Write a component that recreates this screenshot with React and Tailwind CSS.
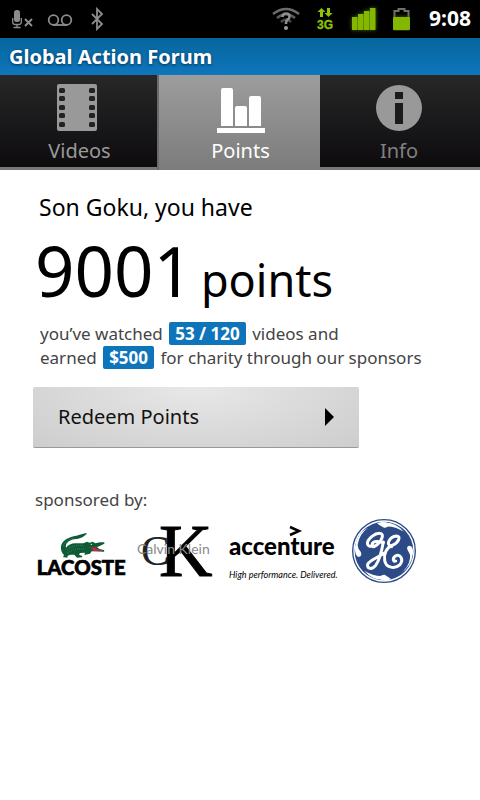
import React from "react";

function StatusBar() {
  return (
    <header className="flex h-[38px] items-center bg-black pr-[9px] pl-3 text-[#8c8c8c]">
      <svg width="21" height="20" viewBox="0 0 21 20" fill="none" stroke="currentColor" aria-label="Microphone muted">
        <rect x="2" y="1" width="6" height="12" rx="2.500" fill="currentColor" stroke="none" />
        <path d="M.7 9v4q0 2.500 2.500 2.500h3.600q2.500 0 2.500-2.500V9M5 15v3M1.500 18.500h7" strokeWidth="1.300" />
        <path d="M13 10l7 7M20 10l-7 7" strokeWidth="2" />
      </svg>
      <svg className="ml-[14px]" width="26" height="14" viewBox="0 -2 26 14" fill="none" stroke="currentColor" strokeWidth="1.800" aria-label="Voicemail">
        <circle cx="6.500" cy="6" r="4.800" />
        <circle cx="19.500" cy="6" r="4.800" />
        <path d="M6 11h14" />
      </svg>
      <svg className="ml-[17px]" width="14" height="24" viewBox="0 0 14 24" fill="none" stroke="currentColor" strokeWidth="1.800" aria-label="Bluetooth">
        <path d="M2 7l10 10-5 5V2l5 5L2 17" />
      </svg>
      <svg className="ml-auto" width="28" height="24" viewBox="0 0 28 24" fill="none" aria-label="Wi-Fi">
        <path d="M1 7Q14-3 27 7" stroke="#6b6b6b" strokeWidth="2.500" />
        <path d="M5 11Q14 3.500 23 11" stroke="#5c5c5c" strokeWidth="2.500" />
        <path d="M9 15Q14 10 19 15" stroke="#484848" strokeWidth="2.500" />
        <path d="M10.500 10q0-3.500 3.500-3.500t3.500 3q0 2-1.800 3.200T14 16v1" stroke="#8e8e8e" strokeWidth="2.600" />
        <circle cx="14" cy="21" r="2" fill="#9a9a9a" />
      </svg>
      <svg className="ml-[17px] text-[#8fc400]" width="17" height="24" viewBox="0 0 17 24" fill="currentColor" aria-label="3G data">
        <path d="M4.500 1l4 4H6v5H3V5H.5zM11.500 10l4-4H13V1h-3v5H7.500z" />
        <text x="0" y="22" fontSize="12" stroke="currentColor" strokeWidth=".3" className="font-['Liberation_Sans'] font-bold">3G</text>
      </svg>
      <svg className="ml-[18px] text-[#84b800] drop-shadow-[0_0_2px_#4d6c00]" width="24" height="22" viewBox="0 0 24 22" fill="currentColor" aria-label="Signal strength">
        <rect x="0" y="9" width="5.500" height="13" />
        <rect x="6" y="6" width="5.500" height="16" />
        <rect x="12" y="3" width="5.500" height="19" />
        <rect x="18" y="0" width="5.500" height="22" />
      </svg>
      <svg className="ml-[17px]" width="17" height="24" viewBox="0 0 17 24" aria-label="Battery">
        <path d="M1.500 11V4h4V2h6v2h4v7" fill="none" stroke="#707070" strokeWidth="2" />
        <rect x="0" y="10" width="17" height="13" rx="1" fill="#84b800" className="drop-shadow-[0_0_2px_#4d6c00]" />
      </svg>
      <time className="ml-[19px] text-[21px] font-bold text-white">9:08</time>
    </header>
  );
}

const FILM_HOLES = [4, 12, 21, 29, 38];

function FilmIcon() {
  return (
    <svg className="mr-[6px]" width="40" height="47" viewBox="0 0 40 47">
      <rect width="40" height="47" rx="2" fill="#999" />
      {FILM_HOLES.map((y) => (
        <g key={y} fill="#222">
          <rect x="2" y={y} width="6" height="5" rx="1.500" />
          <rect x="32" y={y} width="6" height="5" rx="1.500" />
        </g>
      ))}
    </svg>
  );
}

function ChartIcon() {
  return (
    <svg width="48" height="47" viewBox="0 0 48 47" fill="#fff">
      <path d="M4 40V4q0-2 2-2h8q2 0 2 2v36zM18 40V22q0-2 2-2h8q2 0 2 2v18zM32 40V12q0-2 2-2h8q2 0 2 2v28zM0 42h48v5H0z" />
    </svg>
  );
}

function InfoIcon() {
  return (
    <svg width="48" height="48" viewBox="0 0 48 48">
      <circle cx="24" cy="25" r="23" fill="#999" />
      <path d="M20 9h8v7h-8zM20 20h8v21h-8z" fill="#1b1b1b" />
    </svg>
  );
}

function Tab({ icon, label, active, dim }) {
  return (
    <button
      type="button"
      role="tab"
      aria-selected={!!active}
      className={
        active
          ? "flex h-[95px] flex-col items-center justify-end border-l-2 border-[#6a6a6a] bg-linear-to-b from-[#9d9d9d] to-[#7c7c7c] pb-[5px] pl-[2px] text-white"
          : "flex h-[95px] flex-col items-center justify-end border-b-3 border-[#777] bg-linear-to-b from-[#282828] to-[#0d0b0e] pb-[2px] " +
            (dim ? "pr-[2px] text-[#808080]" : "pl-[2px] text-[#999]")
      }
    >
      {icon}
      <span className={active ? "mt-1 text-[20px] leading-[28px]" : "mt-[6px] text-[20px] leading-[28px]"}>{label}</span>
    </button>
  );
}

function Badge({ children }) {
  return <strong className="mx-[2px] rounded-xs bg-[#0f75bb] px-[6px] text-white">{children}</strong>;
}

function Lacoste() {
  return (
    <svg className="overflow-visible" width="90" height="48" viewBox="42 145 270 144" role="img" aria-label="Lacoste">
      <path
        d="M198 163C186 164 176 169 166 171C144 174 124 184 120 202C119 214 122 222 129 229L126 235L139 237L140 231L148 228L160 228L168 237L183 236L184 232L174 228L177 223L192 222L190 229L207 225L212 218L249 219L250 215L236 211L228 206L250 195L250 191L237 191L223 194L215 189L206 192L198 189L187 194L166 194C153 193 142 198 135 207C132 196 143 185 159 182C178 180 191 175 198 163Z"
        fill="#0e5b38"
      />
      <path d="M139 213Q158 197 190 201M140 222Q165 207 190 211M127 201Q137 183 160 178" fill="none" stroke="#8bb59b" strokeWidth="1.800" strokeDasharray="2 4" />
      <path d="M202 205L219 207L231 202L222 209L247 217L217 217L212 209Z" fill="#d72540" />
      <circle cx="211" cy="197" r="2" fill="#fff" />
      <text x="47" y="289" fontSize="61" fontWeight="900" stroke="#000" strokeWidth="2" className="font-['Lato',sans-serif]">LACOSTE</text>
    </svg>
  );
}

function CalvinKlein() {
  return (
    <svg className="overflow-visible" width="80" height="58" viewBox="0 0 80 58" role="img" aria-label="Calvin Klein">
      <text x="4" y="43" fontSize="43" className="font-['Liberation_Serif',serif]" fill="#222">C</text>
      <text x="22" y="54" fontSize="74" className="font-['Liberation_Serif',serif]" stroke="#000" strokeWidth="1">K</text>
      <text x="0" y="32" fontSize="14" className="font-['Lato',sans-serif]" fill="#8a8a8a">Calvin Klein</text>
    </svg>
  );
}

function Accenture() {
  return (
    <svg className="overflow-visible" width="110" height="58" viewBox="0 0 110 58" role="img" aria-label="accenture. High performance. Delivered.">
      <path d="M61 5l9 4-9 4" fill="none" stroke="#000" strokeWidth="2.500" />
      <text x="0" y="33" fontSize="24" fontWeight="900" className="font-['Lato',sans-serif]">accenture</text>
      <text x="0" y="56" fontSize="9" fontStyle="italic" className="font-['Lato',sans-serif]">High performance. Delivered.</text>
    </svg>
  );
}

function GeneralElectric() {
  return (
    <svg width="66" height="66" viewBox="34 24 198 198" fill="none" role="img" aria-label="General Electric">
      <circle cx="133" cy="123" r="94" fill="#fff" stroke="#2b4a86" strokeWidth="4" />
      <circle cx="133" cy="123" r="88" fill="#2b4a86" />
      <g fill="#fff">
        <path d="M112 40Q137 29 146 43Q146 54 133 53Q118 46 112 40Z" />
        <path d="M46 112Q45 140 58 141Q69 137 63 125Q54 117 54 103Q60 70 86 53Q51 68 46 112Z" />
        <path d="M220 130Q222 108 208 107Q198 111 205 122Q213 133 211 145Q207 174 180 192Q215 172 220 130Z" />
        <path d="M155 208Q128 218 121 205Q120 194 135 194Q148 202 155 208Z" />
        <path d="M128 38Q165 34 192 65Q163 46 132 50Z" />
        <path d="M138 209Q100 213 74 182Q105 201 135 197Z" />
      </g>
      <g stroke="#fff" strokeWidth="9" strokeLinecap="round" strokeLinejoin="round">
        <path d="M103 108C78 114 78 94 97 79C113 67 131 67 128 80C125 96 98 122 97 105C98 91 117 94 131 98" />
        <path d="M131 96C127 119 121 148 108 166C97 180 81 177 84 163C88 151 111 145 134 129" />
        <path d="M156 110C136 104 150 80 170 78C186 78 176 98 160 105C139 113 132 133 135 151C138 174 166 178 181 164C193 148 181 130 167 138C157 146 161 157 168 153" />
      </g>
    </svg>
  );
}

export default function App() {
  return (
    <div className="min-h-screen bg-white font-['Noto_Sans',sans-serif] text-black">
      <StatusBar />
      <h1 className="flex h-[37px] items-center bg-linear-to-b from-[#06679c] to-[#0f75bc] px-[9px] text-[20px] font-bold text-white text-shadow-[0_1px_3px_#003355]">
        Global Action Forum
      </h1>
      <nav role="tablist" className="grid grid-cols-[157fr_163fr_160fr]">
        <Tab icon={<FilmIcon />} label="Videos" />
        <Tab icon={<ChartIcon />} label="Points" active />
        <Tab icon={<InfoIcon />} label="Info" dim />
      </nav>
      <main className="px-[33px] pt-[21px]">
        <p className="px-[6px] text-[23px] leading-[32px]">Son Goku, you have</p>
        <p className="mt-[5px] flex items-baseline gap-2 px-[2px] leading-[84px]">
          <span className="text-[69px]">9001</span>
          <span className="text-[45px]">points</span>
        </p>
        <p className="px-[7px] text-[17px] leading-[24px] text-[#444]">
          you’ve watched <Badge>53 / 120</Badge> videos and
          <br />
          earned <Badge>$500</Badge> for charity through our sponsors
        </p>
        <button
          type="button"
          className="mt-[17px] flex h-[61px] w-full max-w-[326px] items-center justify-between rounded-xs border-b border-[#999] bg-radial-[at_50%_0%] from-[#e8e8e8] to-[#cdcdcd] px-[25px] text-[20px] text-[#111]"
        >
          Redeem Points
          <svg width="9" height="18" viewBox="0 0 9 18" aria-hidden="true">
            <path d="M0 0l9 9-9 9z" />
          </svg>
        </button>
        <section className="mt-[40px]">
          <h2 className="px-[2px] text-[17px] leading-[24px] text-[#444]">sponsored by:</h2>
          <div className="mt-[6px] flex items-center gap-3 px-[2px]">
            <Lacoste />
            <CalvinKlein />
            <Accenture />
            <GeneralElectric />
          </div>
        </section>
      </main>
    </div>
  );
}
